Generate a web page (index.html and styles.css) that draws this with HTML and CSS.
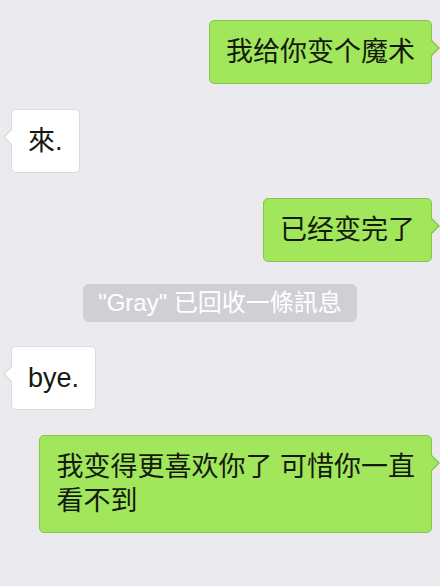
FILE: index.html
```html
<!DOCTYPE html>
<html lang="zh">
<head>
<meta charset="utf-8">
<link rel="stylesheet" href="styles.css">
</head>
<body>
<div class="chat">
  <div class="row row-me">
    <div class="bubble bubble-me">我给你变个魔术</div>
  </div>
  <div class="row row-other">
    <div class="bubble bubble-other">來.</div>
  </div>
  <div class="row row-me">
    <div class="bubble bubble-me">已经变完了</div>
  </div>
  <div class="row row-system">
    <div class="system">"Gray" 已回收一條訊息</div>
  </div>
  <div class="row row-other">
    <div class="bubble bubble-other">bye.</div>
  </div>
  <div class="row row-me">
    <div class="bubble bubble-me">我变得更喜欢你了 可惜你一直<br>看不到</div>
  </div>
</div>
</body>
</html>
```
FILE: styles.css
```css
html, body {
  margin: 0;
  padding: 0;
  background: #ebeaee;
}

body {
  width: 440px;
  height: 586px;
  overflow: hidden;
  font-family: "Liberation Sans", "Noto Sans CJK SC", "Noto Sans CJK TC", sans-serif;
}

.chat {
  display: flex;
  flex-direction: column;
  gap: 25px;
  padding: 20px 8px 0 11px;
}

.row {
  display: flex;
}

.row-me {
  justify-content: flex-end;
}

.row-other {
  justify-content: flex-start;
}

.row-system {
  justify-content: center;
  margin: -3px -8px -1px -11px;
}

.bubble {
  position: relative;
  font-size: 27px;
  line-height: 34px;
  padding: 14px 16px;
  border-radius: 5px;
  white-space: nowrap;
  color: #141a10;
}

.bubble-me {
  background: #a1e65b;
  border: 1px solid #88c451;
}

.bubble-other {
  background: #ffffff;
  border: 1px solid #dcdcdc;
}

.bubble::before,
.bubble::after {
  content: "";
  position: absolute;
  top: 19px;
  width: 0;
  height: 0;
  border-top: 8px solid transparent;
  border-bottom: 8px solid transparent;
}

.bubble-me::before {
  right: -9px;
  border-left: 8px solid #88c451;
}

.bubble-me::after {
  right: -7px;
  border-left: 7px solid #a1e65b;
  border-top-width: 7px;
  border-bottom-width: 7px;
  top: 20px;
}

.bubble-other::before {
  left: -9px;
  border-right: 8px solid #dcdcdc;
}

.bubble-other::after {
  left: -7px;
  border-right: 7px solid #ffffff;
  border-top-width: 7px;
  border-bottom-width: 7px;
  top: 20px;
}

.system {
  background: #d0cfd3;
  color: #ffffff;
  font-size: 24px;
  line-height: 34px;
  padding: 2px 15px;
  border-radius: 6px;
  white-space: nowrap;
}
```
